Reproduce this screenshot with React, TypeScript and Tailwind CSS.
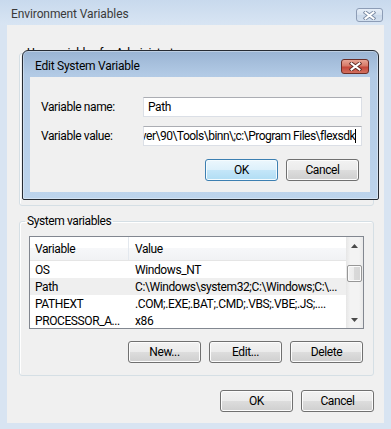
import type { ReactNode } from "react";

const rows = [
  { name: "OS", value: "Windows_NT", hot: false },
  { name: "Path", value: "C:\\Windows\\system32;C:\\Windows;C:\\...", hot: true },
  { name: "PATHEXT", value: ".COM;.EXE;.BAT;.CMD;.VBS;.VBE;.JS;....", hot: false },
  { name: "PROCESSOR_A...", value: "x86", hot: false },
];

function CloseX({ outline }: { outline: string }) {
  return (
    <svg width="13" height="9" viewBox="0 0 13 9">
      <path d="M2.5 1.5 L10.5 7.5 M10.5 1.5 L2.5 7.5" stroke={outline} strokeWidth="3.8" strokeLinecap="square" fill="none" />
      <path d="M2.5 1.5 L10.5 7.5 M10.5 1.5 L2.5 7.5" stroke="#ffffff" strokeWidth="2" strokeLinecap="square" fill="none" />
    </svg>
  );
}

function WinButton({ children, primary }: { children: ReactNode; primary?: boolean }) {
  return (
    <button
      className={
        primary
          ? "w-[73px] h-[22px] shrink-0 rounded-[3px] border border-[#3c7fb1] bg-[linear-gradient(#ecf7fd_0%,#dcf0fb_50%,#c4e6f9_50%,#b0ddf4_100%)] shadow-[inset_0_0_0_1px_#f4fbfe] flex items-center justify-center text-[12px] tracking-[-0.4px] text-black"
          : "w-[73px] h-[22px] shrink-0 rounded-[3px] border border-[#707070] bg-[linear-gradient(#f2f2f2_0%,#ebebeb_50%,#dddddd_50%,#cfcfcf_100%)] shadow-[inset_0_0_0_1px_#fcfcfc] flex items-center justify-center text-[12px] tracking-[-0.4px] text-black"
      }
    >
      {children}
    </button>
  );
}

function ScrollArrow({ up }: { up?: boolean }) {
  return (
    <div className="h-[17px] flex items-center justify-center">
      <svg width="7" height="4" viewBox="0 0 7 4">
        <polygon points={up ? "0,4 7,4 3.5,0" : "0,0 7,0 3.5,4"} fill="#4a4a4a" />
      </svg>
    </div>
  );
}

export default function App() {
  return (
    <div className="relative w-[391px] h-[429px] overflow-hidden bg-[#d8e4f2] font-['Roboto',sans-serif] text-black">
      {/* Outer window title bar (inactive) */}
      <div className="h-[25px] flex items-start justify-between bg-[linear-gradient(180deg,#c8d9ed_0%,#d8e5f3_100%)]">
        <span className="pl-[11px] pt-[6px] text-[12px] leading-[16px] tracking-[-0.1px] text-[#3a3a3a]">
          Environment Variables
        </span>
        <div className="mt-[8px] mr-[8px] w-[27px] h-[14px] rounded-[3px] border border-[#8d9db6] bg-[linear-gradient(#e6eef8_0%,#d5e1ef_50%,#c9d8ea_50%,#d3e0ef_100%)] flex items-center justify-center">
          <CloseX outline="#7a8aa3" />
        </div>
      </div>

      {/* Outer window client area */}
      <div className="mx-[7px] h-[398px] bg-[#f0f0f0] flex flex-col pl-[12px] pr-[10px] pt-[20px]">
        <fieldset className="h-[161px] border border-[#d5dfe5] rounded-[3px] shadow-[inset_1px_1px_0_#ffffff]">
          <legend className="ml-[5px] px-[2px] text-[12px] leading-[16px] tracking-[-0.4px]">
            User variables for Administrator
          </legend>
        </fieldset>

        <fieldset className="mt-[7px] h-[163px] border border-[#d5dfe5] rounded-[3px] shadow-[inset_1px_1px_0_#ffffff]">
          <legend className="ml-[5px] px-[2px] text-[12px] leading-[16px] tracking-[-0.4px]">System variables</legend>
          <div className="flex flex-col px-[9px] pt-[7px]">
            {/* List view */}
            <div className="h-[93px] border border-[#828790] bg-white flex overflow-hidden">
              <div className="flex-1 flex flex-col overflow-hidden">
                <div className="h-[24px] shrink-0 flex border-b border-[#e5e5e5] bg-[linear-gradient(#ffffff_0%,#ffffff_50%,#f6f7f9_50%,#f1f2f4_100%)] text-[12px] tracking-[-0.4px]">
                  <div className="w-[99px] pl-[5px] flex items-center border-r border-[#e3e8ee]">Variable</div>
                  <div className="flex-1 pl-[6px] flex items-center">Value</div>
                </div>
                {rows.map((r) => (
                  <div
                    key={r.name}
                    className={
                      r.hot
                        ? "h-[17px] shrink-0 flex items-center bg-[#efefef] text-[12px] tracking-[-0.4px] whitespace-nowrap"
                        : "h-[17px] shrink-0 flex items-center text-[12px] tracking-[-0.4px] whitespace-nowrap"
                    }
                  >
                    <span className="w-[99px] pl-[5px]">{r.name}</span>
                    <span className="pl-[6px]">{r.value}</span>
                  </div>
                ))}
              </div>
              {/* Vertical scrollbar */}
              <div className="w-[17px] flex flex-col bg-[linear-gradient(90deg,#e6e6e6_0%,#f3f3f3_25%,#f3f3f3_75%,#e9e9e9_100%)]">
                <ScrollArrow up />
                <div className="mt-[11px] mx-[1px] h-[17px] rounded-[2px] border border-[#979797] bg-[linear-gradient(90deg,#f2f2f2_0%,#ebebeb_50%,#d9d9d9_50%,#d6d6d6_100%)] shadow-[inset_0_0_0_1px_#fbfbfb]" />
                <div className="flex-1" />
                <ScrollArrow />
              </div>
            </div>

            <div className="mt-[12px] flex justify-end gap-[8px] pr-[1px]">
              <WinButton>New...</WinButton>
              <WinButton>Edit...</WinButton>
              <WinButton>Delete</WinButton>
            </div>
          </div>
        </fieldset>

        <div className="mt-[14px] flex justify-end gap-[8px]">
          <WinButton>OK</WinButton>
          <WinButton>Cancel</WinButton>
        </div>
      </div>

      {/* Modal: Edit System Variable (active) */}
      <div className="absolute left-[22px] top-[50px] w-[357px] h-[150px] rounded-t-[6px] rounded-b-[2px] border border-[#262b33] bg-[linear-gradient(180deg,#9ab4d3_0px,#b2cae5_24px,#bdd4ec_100%)] shadow-[inset_0_0_0_1px_rgba(255,255,255,0.35)] flex flex-col">
        <div className="h-[26px] shrink-0 flex items-start justify-between">
          <span className="pl-[12px] pt-[7px] text-[12px] leading-[16px] tracking-[-0.25px]">Edit System Variable</span>
          <div className="mt-[8px] mr-[9px] w-[28px] h-[15px] rounded-[3px] border border-[#6b2c25] bg-[linear-gradient(#e7a595_0%,#d77a68_45%,#c4473a_55%,#d2705f_100%)] flex items-center justify-center">
            <CloseX outline="#5e2a24" />
          </div>
        </div>
        <div className="ml-[7px] mr-[8px] h-[115px] bg-[#f0f0f0] flex flex-col pt-[20px] pr-[8px] text-[12px] tracking-[-0.4px]">
          <div className="h-[20px] flex items-center">
            <span className="w-[113px] shrink-0 pl-[11px]">Variable name:</span>
            <div className="w-[219px] h-[20px] border border-[#dbdfe6] border-t-[#abadb3] bg-white flex items-center pl-[4px]">
              Path
            </div>
          </div>
          <div className="mt-[9px] h-[20px] flex items-center">
            <span className="w-[113px] shrink-0 pl-[11px]">Variable value:</span>
            <div className="w-[219px] h-[20px] border border-[#dbdfe6] border-t-[#abadb3] bg-white flex items-center justify-end overflow-hidden pl-[2px] pr-[5px]">
              <span className="shrink-0 whitespace-nowrap tracking-[-0.5px]">ver\90\Tools\binn\;c:\Program Files\flexsdk</span>
              <span className="shrink-0 w-[1px] h-[14px] bg-black" />
            </div>
          </div>
          <div className="mt-[13px] flex justify-end gap-[8px] pr-[3px]">
            <WinButton primary>OK</WinButton>
            <WinButton>Cancel</WinButton>
          </div>
        </div>
      </div>
    </div>
  );
}
